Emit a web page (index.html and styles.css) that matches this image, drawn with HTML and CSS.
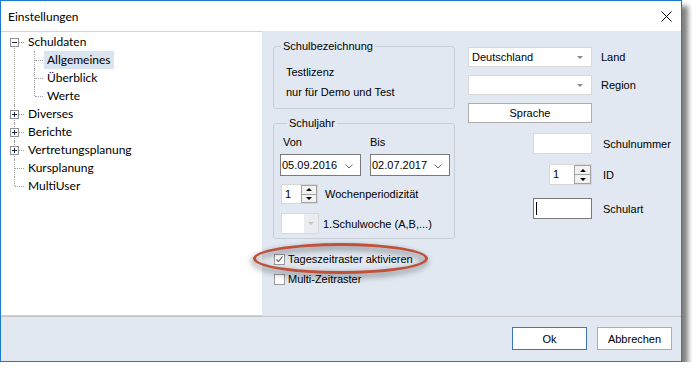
FILE: index.html
```html
<!DOCTYPE html>
<html lang="de">
<head>
  <meta charset="UTF-8">
  <title>Einstellungen</title>
  <link rel="stylesheet" href="styles.css">
</head>
<body>
  <div class="window">
    <div class="titlebar">
      <span class="title">Einstellungen</span>
      <svg class="close" width="11" height="11" viewBox="0 0 11 11">
        <path d="M0.5 0.5 L10.5 10.5 M10.5 0.5 L0.5 10.5" stroke="#000" stroke-width="1" fill="none"/>
      </svg>
    </div>
    <div class="main">
      <div class="tree">
        <ul class="tree-root">
          <li><span class="exp minus"></span><span class="label">Schuldaten</span>
            <ul>
              <li><span class="label selected">Allgemeines</span></li>
              <li><span class="label">Überblick</span></li>
              <li><span class="label">Werte</span></li>
            </ul>
          </li>
          <li><span class="exp plus"></span><span class="label">Diverses</span></li>
          <li><span class="exp plus"></span><span class="label">Berichte</span></li>
          <li><span class="exp plus"></span><span class="label">Vertretungsplanung</span></li>
          <li><span class="label">Kursplanung</span></li>
          <li><span class="label">MultiUser</span></li>
        </ul>
      </div>

      <div class="pane">
        <div class="col-left">
          <fieldset class="group group-name">
            <legend>Schulbezeichnung</legend>
            <div class="line first">Testlizenz</div>
            <div class="line">nur für Demo und Test</div>
          </fieldset>

          <fieldset class="group group-year">
            <legend>Schuljahr</legend>
            <div class="dates">
              <span class="date-label von">Von</span>
              <span class="date-label">Bis</span>
              <div class="datepicker">05.09.2016
                <svg class="chev" width="8" height="5" viewBox="0 0 8 5"><path d="M0.5 0.5 L4 4 L7.5 0.5" stroke="#666" fill="none"/></svg>
              </div>
              <div class="datepicker">02.07.2017
                <svg class="chev" width="8" height="5" viewBox="0 0 8 5"><path d="M0.5 0.5 L4 4 L7.5 0.5" stroke="#666" fill="none"/></svg>
              </div>
            </div>
            <div class="field-row spin-row">
              <div class="spinner small">
                <span class="spin-value">1</span>
                <div class="spin-buttons">
                  <span class="spin-btn"><span class="tri up"></span></span>
                  <span class="spin-btn"><span class="tri down"></span></span>
                </div>
              </div>
              <span class="field-label wp">Wochenperiodizität</span>
            </div>
            <div class="field-row combo-row">
              <div class="combo disabled">
                <span class="combo-btn"><span class="arrow"></span></span>
              </div>
              <span class="field-label">1.Schulwoche (A,B,...)</span>
            </div>
          </fieldset>

          <div class="check first-check"><span class="box checked">
            <svg width="9" height="9" viewBox="0 0 9 9"><path d="M1.5 4.5 L3.5 6.5 L7.5 1.5" stroke="#6b6b6b" stroke-width="1.2" fill="none"/></svg>
          </span>Tageszeitraster aktivieren</div>
          <div class="check"><span class="box"></span>Multi-Zeitraster</div>
        </div>

        <div class="col-right">
          <div class="rrow r-land">
            <div class="cell"><div class="combo wide"><span class="combo-text">Deutschland</span><span class="arrow"></span></div></div>
            <span class="rlabel">Land</span>
          </div>
          <div class="rrow r-region">
            <div class="cell"><div class="combo wide"><span class="combo-text"></span><span class="arrow"></span></div></div>
            <span class="rlabel">Region</span>
          </div>
          <div class="rrow r-sprache">
            <div class="cell"><button class="btn wide-btn">Sprache</button></div>
          </div>
          <div class="rrow r-nummer">
            <div class="cell"><div class="textbox"></div></div>
            <span class="rlabel far">Schulnummer</span>
          </div>
          <div class="rrow r-id">
            <div class="cell">
              <div class="spinner id-spin">
                <span class="spin-value">1</span>
                <div class="spin-buttons">
                  <span class="spin-btn"><span class="tri up"></span></span>
                  <span class="spin-btn"><span class="tri down"></span></span>
                </div>
              </div>
            </div>
            <span class="rlabel far">ID</span>
          </div>
          <div class="rrow r-art">
            <div class="cell"><div class="textbox focused"><span class="caret"></span></div></div>
            <span class="rlabel far">Schulart</span>
          </div>
        </div>
      </div>
    </div>

    <div class="footer">
      <button class="btn footer-btn default">Ok</button>
      <button class="btn footer-btn">Abbrechen</button>
    </div>

    <div class="ring"></div>
  </div>
</body>
</html>
```

FILE: styles.css
```css
body {
  margin: 0;
  background-color: #fff;
  font-family: 'Liberation Sans', Arial, sans-serif;
  font-size: 11px;
  color: #000;
}

.window {
  position: relative;
  width: 682px;
  height: 362px;
  box-sizing: border-box;
  border: 1px solid #1a7bd0;
  background-color: #e1e8f1;
  box-shadow: 6px 6px 5px rgba(0, 0, 0, 0.5);
  display: flex;
  flex-direction: column;
}

.titlebar {
  height: 30px;
  background-color: #fff;
  display: flex;
  align-items: center;
  justify-content: space-between;
  padding: 0 9px 0 7px;
  flex: 0 0 auto;
}

.title {
  font-family: 'Lato', 'Noto Sans', sans-serif;
  font-size: 12px;
  margin-top: 1px;
}

.close {
  margin-top: 1px;
}

.main {
  display: flex;
  height: 285px;
  flex: 0 0 auto;
}

/* tree on the left */
.tree {
  width: 261px;
  box-sizing: border-box;
  background-color: #fff;
  border-top: 1px solid #d4d4d4;
  border-bottom: 1px solid #d0d0d0;
  padding-top: 1px;
  font-family: 'Lato', 'Noto Sans', sans-serif;
  font-size: 12px;
}

.tree ul {
  list-style: none;
  margin: 0;
  padding: 0;
}

.tree li {
  position: relative;
  padding-left: 24px;
}

.tree li::before {
  content: '';
  position: absolute;
  left: 13px;
  top: 0;
  bottom: 0;
  border-left: 1px dotted #a0a0a0;
}

.tree li:last-child::before {
  bottom: auto;
  height: 9px;
}

.tree-root > li:first-child::before {
  top: 9px;
}

.tree li::after {
  content: '';
  position: absolute;
  left: 14px;
  top: 9px;
  width: 9px;
  border-top: 1px dotted #a0a0a0;
}

.tree li ul {
  margin-left: -4px;
}

.tree li li {
  padding-left: 23px;
}

.tree li li::after {
  width: 8px;
}

.tree .label {
  display: inline-block;
  height: 18px;
  line-height: 18px;
  padding: 0 3px;
}

.tree .label.selected {
  background-color: #d9e4f0;
}

.exp {
  position: absolute;
  left: 9px;
  top: 5px;
  width: 9px;
  height: 9px;
  box-sizing: border-box;
  border: 1px solid #919191;
  background-color: #fff;
  z-index: 1;
}

.exp::before {
  content: '';
  position: absolute;
  left: 1px;
  top: 3px;
  width: 5px;
  height: 1px;
  background-color: #1e2a44;
}

.exp.plus::after {
  content: '';
  position: absolute;
  left: 3px;
  top: 1px;
  width: 1px;
  height: 5px;
  background-color: #1e2a44;
}

/* settings pane */
.pane {
  flex: 1;
  display: flex;
  padding: 9px 0 0 11px;
}

.col-left {
  width: 182px;
}

.group {
  margin: 0;
  padding: 0;
  border: 1px solid #c9cfd7;
  border-radius: 3px;
  min-width: 0;
}

.group legend {
  margin-left: 7px;
  padding: 0 2px;
  line-height: 13px;
}

.group-name {
  padding-bottom: 6px;
}

.group-name .line {
  padding-left: 12px;
  line-height: 20px;
}

.group-name .line.first {
  margin-top: 9px;
}

.group-year {
  margin-top: 8px;
  padding: 5px 0 4px 6px;
}

.dates {
  display: grid;
  grid-template-columns: 81px 80px;
  grid-template-rows: 14px 22px;
  column-gap: 9px;
  row-gap: 5px;
}

.date-label {
  line-height: 14px;
}

.date-label.von {
  padding-left: 3px;
}

.datepicker {
  position: relative;
  box-sizing: border-box;
  border: 1px solid #7a7a7a;
  background-color: #fff;
  line-height: 20px;
  padding-left: 1px;
}

.chev {
  position: absolute;
  right: 7px;
  top: 9px;
}

.field-row {
  display: flex;
  align-items: center;
  margin-left: 1px;
}

.spin-row {
  margin-top: 8px;
  height: 20px;
}

.combo-row {
  margin-top: 9px;
  height: 21px;
}

.field-label {
  margin-left: 4px;
}

.field-label.wp {
  margin-left: 7px;
}

.spinner {
  display: flex;
  height: 20px;
  box-sizing: border-box;
  background-color: #fff;
}

.spinner.small {
  width: 37px;
  border: 1px solid #d6d6d6;
}

.spin-value {
  flex: 1;
  line-height: 18px;
  padding-left: 3px;
}

.spin-buttons {
  width: 16px;
  display: flex;
  flex-direction: column;
}

.spin-btn {
  flex: 1;
  box-sizing: border-box;
  border: 1px solid #a2a2a2;
  background-color: #f2f2f2;
  display: flex;
  align-items: center;
  justify-content: center;
}

.spin-btn + .spin-btn {
  border-top: none;
}

.tri {
  width: 0;
  height: 0;
  border-left: 3px solid transparent;
  border-right: 3px solid transparent;
}

.tri.up {
  border-bottom: 3px solid #000;
}

.tri.down {
  border-top: 3px solid #000;
}

.combo {
  position: relative;
  box-sizing: border-box;
  border: 1px solid #d9d9d9;
  background-color: #fff;
}

.combo.disabled {
  width: 38px;
  height: 21px;
  display: flex;
  justify-content: flex-end;
}

.combo-btn {
  width: 14px;
  background-color: #e9ecf0;
  display: flex;
  align-items: center;
  justify-content: center;
}

.combo-btn .arrow {
  position: static;
  border-top-color: #c4c4c4;
}

.arrow {
  position: absolute;
  right: 8px;
  top: 8px;
  width: 0;
  height: 0;
  border-left: 3px solid transparent;
  border-right: 3px solid transparent;
  border-top: 3px solid #8a8a8a;
}

.check {
  display: flex;
  align-items: center;
  height: 20px;
  padding-left: 1px;
}

.first-check {
  margin-top: 10px;
}

.box {
  width: 11px;
  height: 11px;
  box-sizing: border-box;
  border: 1px solid #9a9a9a;
  background-color: #fff;
  margin-right: 3px;
  display: flex;
  align-items: center;
  justify-content: center;
}

/* right column */
.col-right {
  margin-left: 13px;
  padding-top: 7px;
}

.rrow {
  display: flex;
  align-items: center;
}

.rrow .cell {
  width: 124px;
  display: flex;
  justify-content: flex-end;
}

.rlabel {
  margin-left: 9px;
}

.rlabel.far {
  margin-left: 11px;
}

.r-region { margin-top: 8px; }
.r-sprache { margin-top: 8px; }
.r-nummer { margin-top: 10px; }
.r-id { margin-top: 10px; }
.r-art { margin-top: 13px; }

.combo.wide {
  width: 124px;
  height: 20px;
}

.combo-text {
  display: block;
  line-height: 18px;
  padding-left: 3px;
}

.btn {
  font-family: 'Liberation Sans', Arial, sans-serif;
  font-size: 11px;
  color: #000;
  background-color: #fff;
  border: 1px solid #adadad;
  padding: 0;
  margin: 0;
}

.wide-btn {
  width: 124px;
  height: 20px;
}

.textbox {
  position: relative;
  width: 59px;
  height: 21px;
  box-sizing: border-box;
  border: 1px solid #d9d9d9;
  background-color: #fff;
}

.textbox.focused {
  border-color: #7a7a7a;
}

.caret {
  position: absolute;
  left: 2px;
  top: 3px;
  width: 1px;
  height: 13px;
  background-color: #000;
}

.spinner.id-spin {
  width: 43px;
  height: 21px;
  border: 1px solid #d9d9d9;
}

.id-spin .spin-buttons {
  width: 17px;
}

/* footer with buttons */
.footer {
  flex: 1;
  border-top: 1px solid #c5c5c5;
  display: flex;
  justify-content: flex-end;
  align-items: flex-start;
  gap: 10px;
  padding: 10px 9px 0 0;
}

.footer-btn {
  width: 75px;
  height: 23px;
}

.footer-btn.default {
  border-color: #3f74b8;
}

/* red marker around the option */
.ring {
  position: absolute;
  left: 252px;
  top: 242px;
  width: 175px;
  height: 31px;
  box-sizing: border-box;
  border: 3px solid #c0503a;
  border-radius: 50%;
  filter: drop-shadow(-1px 3px 3px rgba(0, 0, 0, 0.6));
}
```
